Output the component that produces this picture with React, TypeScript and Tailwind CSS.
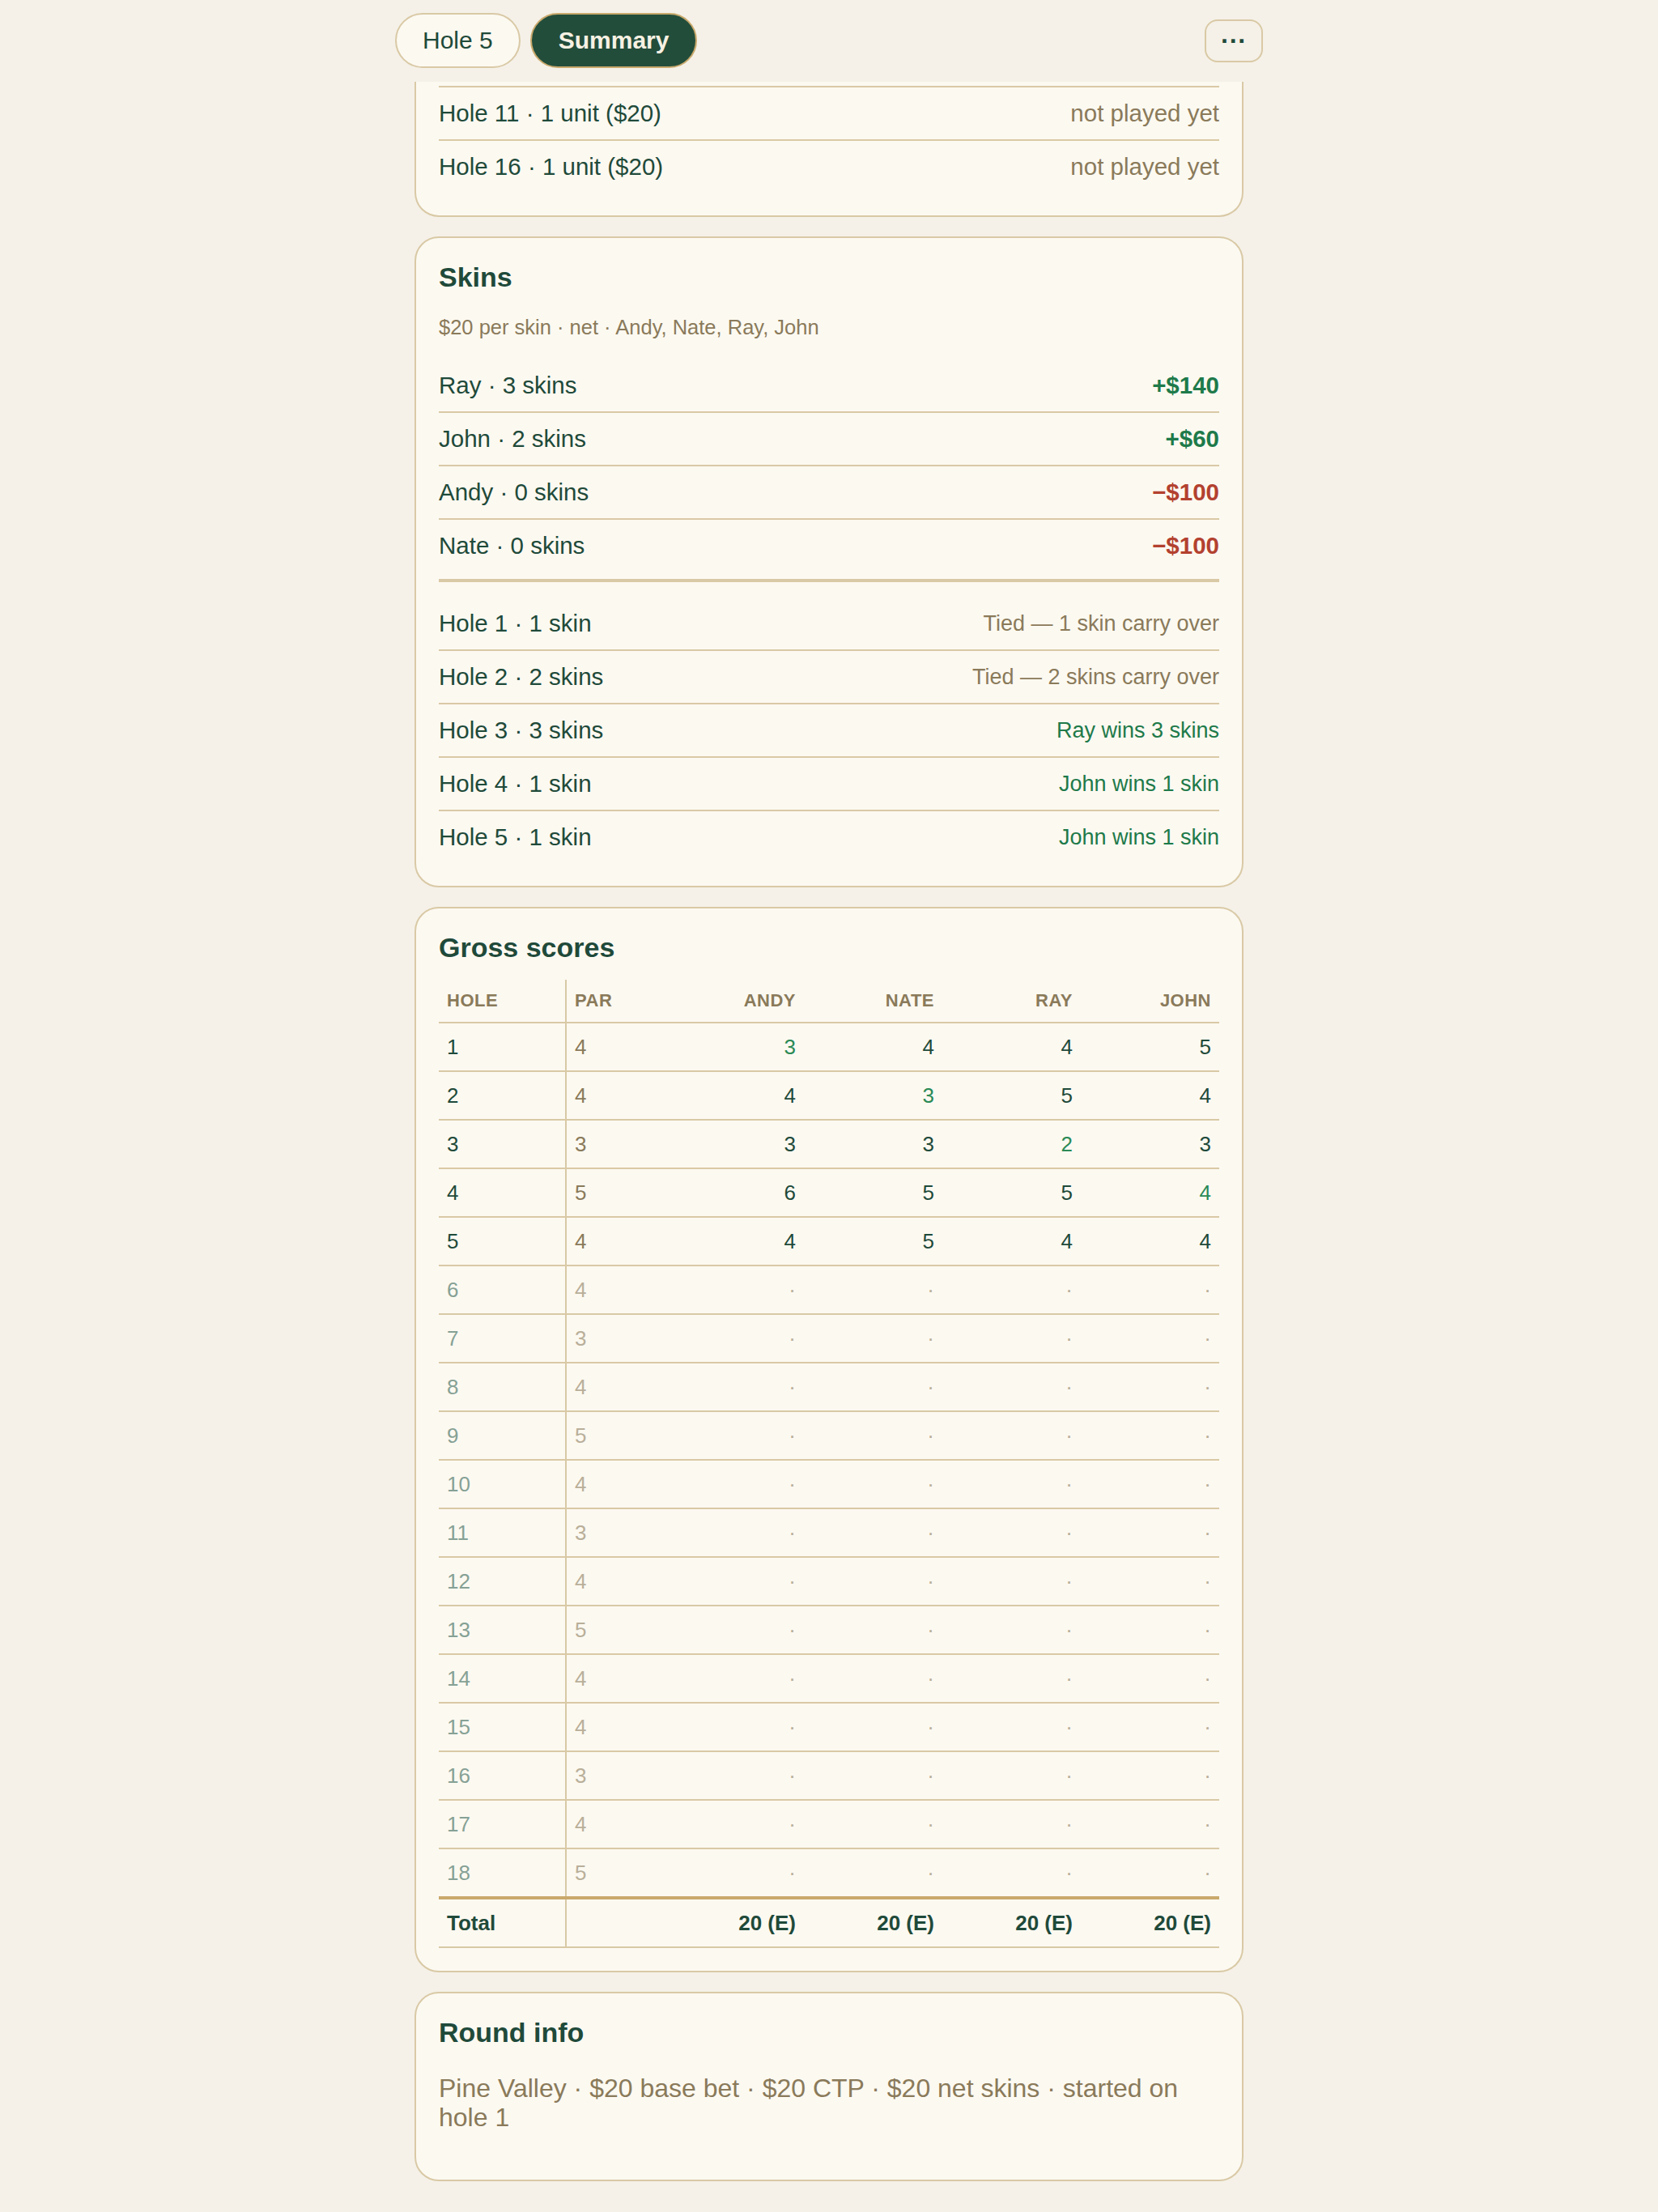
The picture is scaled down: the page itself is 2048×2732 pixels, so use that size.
import React from "react";

type Row = { label: string; value: string; tone: "muted" | "pos" | "neg" };

const players = ["Andy", "Nate", "Ray", "John"];
const pars = [4, 4, 3, 5, 4, 4, 3, 4, 5, 4, 3, 4, 5, 4, 4, 3, 4, 5];
const scores: number[][] = [
  [3, 4, 4, 5],
  [4, 3, 5, 4],
  [3, 3, 2, 3],
  [6, 5, 5, 4],
  [4, 5, 4, 4],
];

const ctpRows: Row[] = [
  { label: "Hole 11 · 1 unit ($20)", value: "not played yet", tone: "muted" },
  { label: "Hole 16 · 1 unit ($20)", value: "not played yet", tone: "muted" },
];

const skinTotals: Row[] = [
  { label: "Ray · 3 skins", value: "+$140", tone: "pos" },
  { label: "John · 2 skins", value: "+$60", tone: "pos" },
  { label: "Andy · 0 skins", value: "\u2212$100", tone: "neg" },
  { label: "Nate · 0 skins", value: "\u2212$100", tone: "neg" },
];

const skinHoles: Row[] = [
  { label: "Hole 1 · 1 skin", value: "Tied — 1 skin carry over", tone: "muted" },
  { label: "Hole 2 · 2 skins", value: "Tied — 2 skins carry over", tone: "muted" },
  { label: "Hole 3 · 3 skins", value: "Ray wins 3 skins", tone: "pos" },
  { label: "Hole 4 · 1 skin", value: "John wins 1 skin", tone: "pos" },
  { label: "Hole 5 · 1 skin", value: "John wins 1 skin", tone: "pos" },
];

function toneClass(tone: Row["tone"], bold: boolean) {
  if (tone === "pos") return bold ? "text-[#1e7a4a] font-bold" : "text-[#1e7a4a]";
  if (tone === "neg") return "text-[#b3412f] font-bold";
  return "text-[#8a7a5a]";
}

function ListRow({ row, bold = false, small = false }: { row: Row; bold?: boolean; small?: boolean }) {
  return (
    <div className="flex items-center justify-between py-[12px] border-b-2 border-[#d9c9a5] last:border-b-0 text-[29.5px] leading-[40px]">
      <span className="text-[#1f4a3a]">{row.label}</span>
      <span className={`${toneClass(row.tone, bold)} ${small ? "text-[27px]" : ""}`}>{row.value}</span>
    </div>
  );
}

function Card({ title, children }: { title: string; children: React.ReactNode }) {
  return (
    <section className="bg-[#fcf9f1] border-2 border-[#d9c9a5] rounded-[30px] p-[28px]">
      <h2 className="text-[34px] leading-[40px] font-bold text-[#1f4a3a]">{title}</h2>
      {children}
    </section>
  );
}

function ScoreTable() {
  const cell = "px-[10px] py-[10px] text-[26px] leading-[38px] border-b-2 border-[#d9c9a5]";
  const head = "px-[10px] py-[12px] text-[22px] leading-[28px] font-bold text-[#8a7a5a] tracking-[0.5px] border-b-2 border-[#d9c9a5]";
  const total = "px-[10px] py-[10px] text-[26px] leading-[38px] font-bold text-[#1f4a3a] border-t-4 border-t-[#c9a96c] border-b-2 border-b-[#d9c9a5]";
  return (
    <table className="w-full table-fixed border-collapse mt-[20px]">
      <colgroup>
        <col className="w-[157px]" />
        <col className="w-[123px]" />
        <col />
        <col />
        <col />
        <col />
      </colgroup>
      <thead>
        <tr>
          <th className={`${head} text-left border-r-2`}>HOLE</th>
          <th className={`${head} text-left`}>PAR</th>
          {players.map((p) => (
            <th key={p} className={`${head} text-right`}>
              {p.toUpperCase()}
            </th>
          ))}
        </tr>
      </thead>
      <tbody>
        {pars.map((par, i) => {
          const played = scores[i];
          return (
            <tr key={i}>
              <td className={`${cell} border-r-2 ${played ? "text-[#1f4a3a]" : "text-[#86a195]"}`}>{i + 1}</td>
              <td className={`${cell} ${played ? "text-[#8a7a5a]" : "text-[#b9af99]"}`}>{par}</td>
              {players.map((p, j) => (
                <td
                  key={p}
                  className={`${cell} text-right ${
                    played ? (played[j] < par ? "text-[#2a8a56]" : "text-[#1f4a3a]") : "text-[#b9af99]"
                  }`}
                >
                  {played ? played[j] : "·"}
                </td>
              ))}
            </tr>
          );
        })}
        <tr>
          <td className={`${total} text-left border-r-2 border-r-[#d9c9a5]`}>Total</td>
          <td className={total}></td>
          {players.map((p) => (
            <td key={p} className={`${total} text-right`}>
              20 (E)
            </td>
          ))}
        </tr>
      </tbody>
    </table>
  );
}

export default function App() {
  return (
    <div className="min-h-[2732px] bg-[#f5f1e8] font-['Liberation_Sans',Arial,sans-serif]">
      <div className="w-[1072px] mx-auto">
        <header className="flex items-center justify-between pt-[16px] pb-[17px] bg-[#f5f1e8]">
          <div className="flex items-center gap-[12px]">
            <button className="px-[32px] py-[12px] rounded-full border-2 border-[#d9c9a5] bg-[#fcf9f1] text-[30px] leading-[40px] text-[#1f4a3a]">
              Hole 5
            </button>
            <button className="px-[33px] py-[12px] rounded-full border-2 border-[#c9a96c] bg-[#234d3b] text-[30px] leading-[40px] font-bold text-[#f7f1e3]">
              Summary
            </button>
          </div>
          <button className="w-[72px] h-[53px] rounded-[16px] border-2 border-[#d9c9a5] flex items-center justify-center text-[32px] leading-none font-bold text-[#1f4a3a]">
            ···
          </button>
        </header>

        <main className="px-[24px] flex flex-col gap-[24px] pb-[38px]">
          <section className="bg-[#fcf9f1] border-x-2 border-b-2 border-[#d9c9a5] rounded-b-[30px] px-[28px] pt-[5px] pb-[28px]">
            <div className="border-t-2 border-[#d9c9a5]">
              {ctpRows.map((r) => (
                <ListRow key={r.label} row={r} />
              ))}
            </div>
          </section>

          <Card title="Skins">
            <p className="mt-[26px] text-[25.5px] leading-[32px] text-[#8a7a5a]">
              $20 per skin · net · Andy, Nate, Ray, John
            </p>
            <div className="mt-[24px]">
              {skinTotals.map((r) => (
                <ListRow key={r.label} row={r} bold />
              ))}
            </div>
            <div className="mt-[9px] border-t-4 border-[#d9c9a5] pt-[19px]">
              {skinHoles.map((r) => (
                <ListRow key={r.label} row={r} small />
              ))}
            </div>
          </Card>

          <Card title="Gross scores">
            <ScoreTable />
          </Card>

          <Card title="Round info">
            <p className="mt-[31px] mb-[31px] text-[32px] leading-[36px] text-[#8a7a5a]">
              Pine Valley · $20 base bet · $20 CTP · $20 net skins · started on hole 1
            </p>
          </Card>
        </main>
      </div>
    </div>
  );
}
